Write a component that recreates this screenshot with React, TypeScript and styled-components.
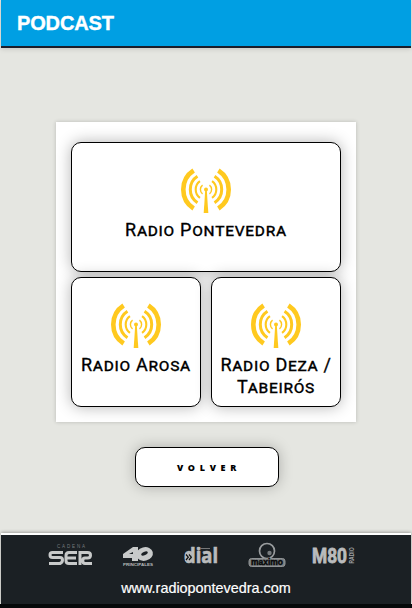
import React from "react";
import styled, { createGlobalStyle } from "styled-components";

const Global = createGlobalStyle`
  *{box-sizing:border-box}
  html,body{margin:0;padding:0;background:#e5e6e1}
  body{overflow:hidden}
`;

const Page = styled.div`
  width: 412px;
  height: 608px;
  display: flex;
  flex-direction: column;
  background: #06090a;
  font-family: "Liberation Sans", Arial, sans-serif;
`;
const Screen = styled.div`
  height: 604px;
  border: solid #e5e6e1;
  border-width: 0 1px;
  display: flex;
  flex-direction: column;
  background: #e5e6e1;
`;
const Header = styled.header`
  flex: none;
  height: 48px;
  padding: 0 16px;
  background: #009fe3;
  border-bottom: 2px solid #1b1d2a;
  box-shadow: 0 1px 5px rgba(0, 0, 0, 0.15);
`;
const Title = styled.h1`
  margin: 0;
  font-size: 20px;
  line-height: 46px;
  font-weight: 700;
  letter-spacing: -0.15px;
  -webkit-text-stroke: 0.4px #fff;
  color: #fff;
`;
const Main = styled.main`
  flex: 1;
  display: flex;
  flex-direction: column;
  align-items: center;
  padding-top: 74px;
  gap: 25px;
`;
const Panel = styled.section`
  width: 300px;
  height: 300px;
  padding: 20px 15px 15px;
  background: #fff;
  box-shadow: 0 0 4px rgba(0, 0, 0, 0.2);
  display: grid;
  grid-template-columns: 130px 130px;
  grid-template-rows: 130px 130px;
  gap: 5px 10px;
`;
const Station = styled.a<{ $wide?: boolean }>`
  grid-column: ${(p) => (p.$wide ? "span 2" : "auto")};
  display: flex;
  flex-direction: column;
  align-items: center;
  padding-top: 25px;
  border: 1px solid #000;
  border-radius: 10px;
  background: #fff;
  box-shadow: 0 0 15px rgba(0, 0, 0, 0.3);
`;
const StationName = styled.span`
  margin-top: 5px;
  font-family: Roboto, sans-serif;
  font-size: 18px;
  line-height: 22px;
  font-variant: small-caps;
  letter-spacing: 0.7px;
  -webkit-text-stroke: 0.3px #000;
  text-align: center;
  white-space: pre-line;
  color: #000;
`;
const Back = styled.button`
  width: 144px;
  height: 40px;
  margin-left: 2px;
  padding: 0 0 0 4px;
  border: 1px solid #000;
  border-radius: 10px;
  background: #fff;
  box-shadow: 0 0 14px rgba(0, 0, 0, 0.25);
  font: 800 9px "Open Sans", sans-serif;
  letter-spacing: 4.7px;
  color: #000;
`;
const Footer = styled.footer`
  flex: none;
  height: 71px;
  border-top: 2px solid #fff;
  background: #1b2024;
  box-shadow: 0 -1px 3px rgba(0, 0, 0, 0.3);
  display: flex;
  flex-direction: column;
  align-items: center;
`;
const Brands = styled.div`
  display: grid;
  grid-template-columns: 74px 62px 64px 64px 44px;
  height: 44px;
  padding-top: 8px;
  margin-left: -8px;
`;
const Site = styled.div`
  font-size: 14.4px;
  line-height: 18px;
  -webkit-text-stroke: 0.2px #fff;
  color: #fff;
`;
const BrandMark = styled.svg`
  display: block;
  height: 26px;
  overflow: visible;
`;

const arc = (r: number, deg: number, side: number) => {
  const a = (deg * Math.PI) / 180;
  const x = 25 + side * r * Math.cos(a);
  const dy = r * Math.sin(a);
  return `M${x} ${21.5 - dy}A${r} ${r} 0 0 ${side > 0 ? 1 : 0} ${x} ${21.5 + dy}`;
};
const waves = [
  { r: 5.6, a: 52, w: 1.4 },
  { r: 10.3, a: 54, w: 2.1 },
  { r: 15.7, a: 57, w: 3 },
  { r: 22.7, a: 57, w: 4.6 },
];
const Antenna = () => (
  <svg width="50" height="46" viewBox="0 0 50 46">
    <g fill="none" stroke="#ffc91f">
      {waves.flatMap((v) =>
        [-1, 1].map((s) => <path key={`${v.r}${s}`} d={arc(v.r, v.a, s)} strokeWidth={v.w} />)
      )}
    </g>
    <circle cx="25" cy="21.500" r="2" fill="#ffc91f" />
    <path d="M24.200 22h1.600l1.500 23h-4.600z" fill="#ffc91f" />
  </svg>
);

const stations = [
  { name: "Radio Pontevedra", wide: true },
  { name: "Radio Arosa" },
  { name: "Radio Deza /\nTabeirós" },
];

const Ser = () => (
  <BrandMark width="46" viewBox="0 0 46 26">
    <text x="9" y="5.200" fontSize="4.500" textLength="28" fill="#777b7e" fontFamily="Liberation Sans">CADENA</text>
    <g fill="none" stroke="#c8caca" strokeWidth="3">
      <path d="M15 9.500H4.500Q2 9.500 2 12t2.500 2.500H12q2.500 0 2.500 2.500T12 20.500H1" />
      <path d="M29 9.500H21q-3 0-3 3v5q0 3 3 3h8M18 15h10" />
      <path d="M32 22V8M31 9.500h8.500q3 0 3 2.700T39.500 15h-2.500q-2.200 0-2.200 2.700t2.200 2.800h7" />
    </g>
  </BrandMark>
);
const Forty = () => (
  <BrandMark width="32" viewBox="0 0 32 26">
    <path d="M1 11 11 4h5v6h2v4h-2v4h-6v-3H1z" fill="#c8caca" />
    <ellipse cx="22.500" cy="11" rx="8.500" ry="6.800" fill="#c8caca" transform="rotate(-14 22.500 11)" />
    <ellipse cx="22.500" cy="10.500" rx="3.500" ry="1.700" fill="#1b2024" transform="rotate(-25 22.500 10.500)" />
    <path d="m7 11 4-2v2z" fill="#1b2024" />
    <text x="1" y="22.500" fontSize="4" fontWeight="700" textLength="30" lengthAdjust="spacingAndGlyphs" fill="#b8baba" fontFamily="Liberation Sans">PRINCIPALES</text>
  </BrandMark>
);
const Dial = () => (
  <BrandMark width="36" viewBox="0 0 36 26">
    <text x="0" y="20" fontSize="20.500" fontWeight="700" textLength="34" lengthAdjust="spacingAndGlyphs" stroke="#b9bbbc" strokeWidth=".7" fill="#b9bbbc" fontFamily="Open Sans">dial</text>
    <rect x="1" y="10.500" width="6.500" height="7.500" fill="#b9bbbc" />
    <path d="m2 11.500 2.300 2.700L2 17m3-5.500 2.300 2.700L5 17" fill="none" stroke="#111" strokeWidth="1.200" />
    <path d="M16 5.500h10" stroke="#777" strokeWidth="1" />
  </BrandMark>
);
const Maximo = () => (
  <BrandMark width="40" viewBox="0 0 40 26">
    <circle cx="19" cy="8" r="7.500" fill="none" stroke="#999c9e" strokeWidth="1.700" />
    <circle cx="21.500" cy="10" r="2.200" fill="#777b7e" />
    <rect x="1" y="15.500" width="36" height="8" rx="2.500" fill="#7d8082" stroke="#8f9294" />
    <text x="3" y="22" fontSize="9" fontWeight="700" textLength="32" lengthAdjust="spacingAndGlyphs" fill="#08090a" stroke="#08090a" strokeWidth=".5" fontFamily="Liberation Sans">maximo</text>
  </BrandMark>
);
const M80 = () => (
  <BrandMark width="44" viewBox="0 0 44 26">
    <text x="0" y="20" fontSize="20" fontWeight="700" textLength="35" lengthAdjust="spacingAndGlyphs" stroke="#b9bbbc" strokeWidth=".8" fill="#b9bbbc" fontFamily="Roboto">M80</text>
    <text transform="translate(42 20.500) rotate(-90)" fontSize="6.500" fontWeight="700" textLength="16" lengthAdjust="spacingAndGlyphs" fill="#a0a3a5" fontFamily="Liberation Sans">RADIO</text>
  </BrandMark>
);

export default function App() {
  return (
    <Page>
      <Global />
      <Screen>
        <Header>
          <Title>PODCAST</Title>
        </Header>
        <Main>
          <Panel>
            {stations.map((s) => (
              <Station key={s.name} $wide={s.wide}>
                <Antenna />
                <StationName>{s.name}</StationName>
              </Station>
            ))}
          </Panel>
          <Back>VOLVER</Back>
        </Main>
        <Footer>
          <Brands>
            <Ser />
            <Forty />
            <Dial />
            <Maximo />
            <M80 />
          </Brands>
          <Site>www.radiopontevedra.com</Site>
        </Footer>
      </Screen>
    </Page>
  );
}
